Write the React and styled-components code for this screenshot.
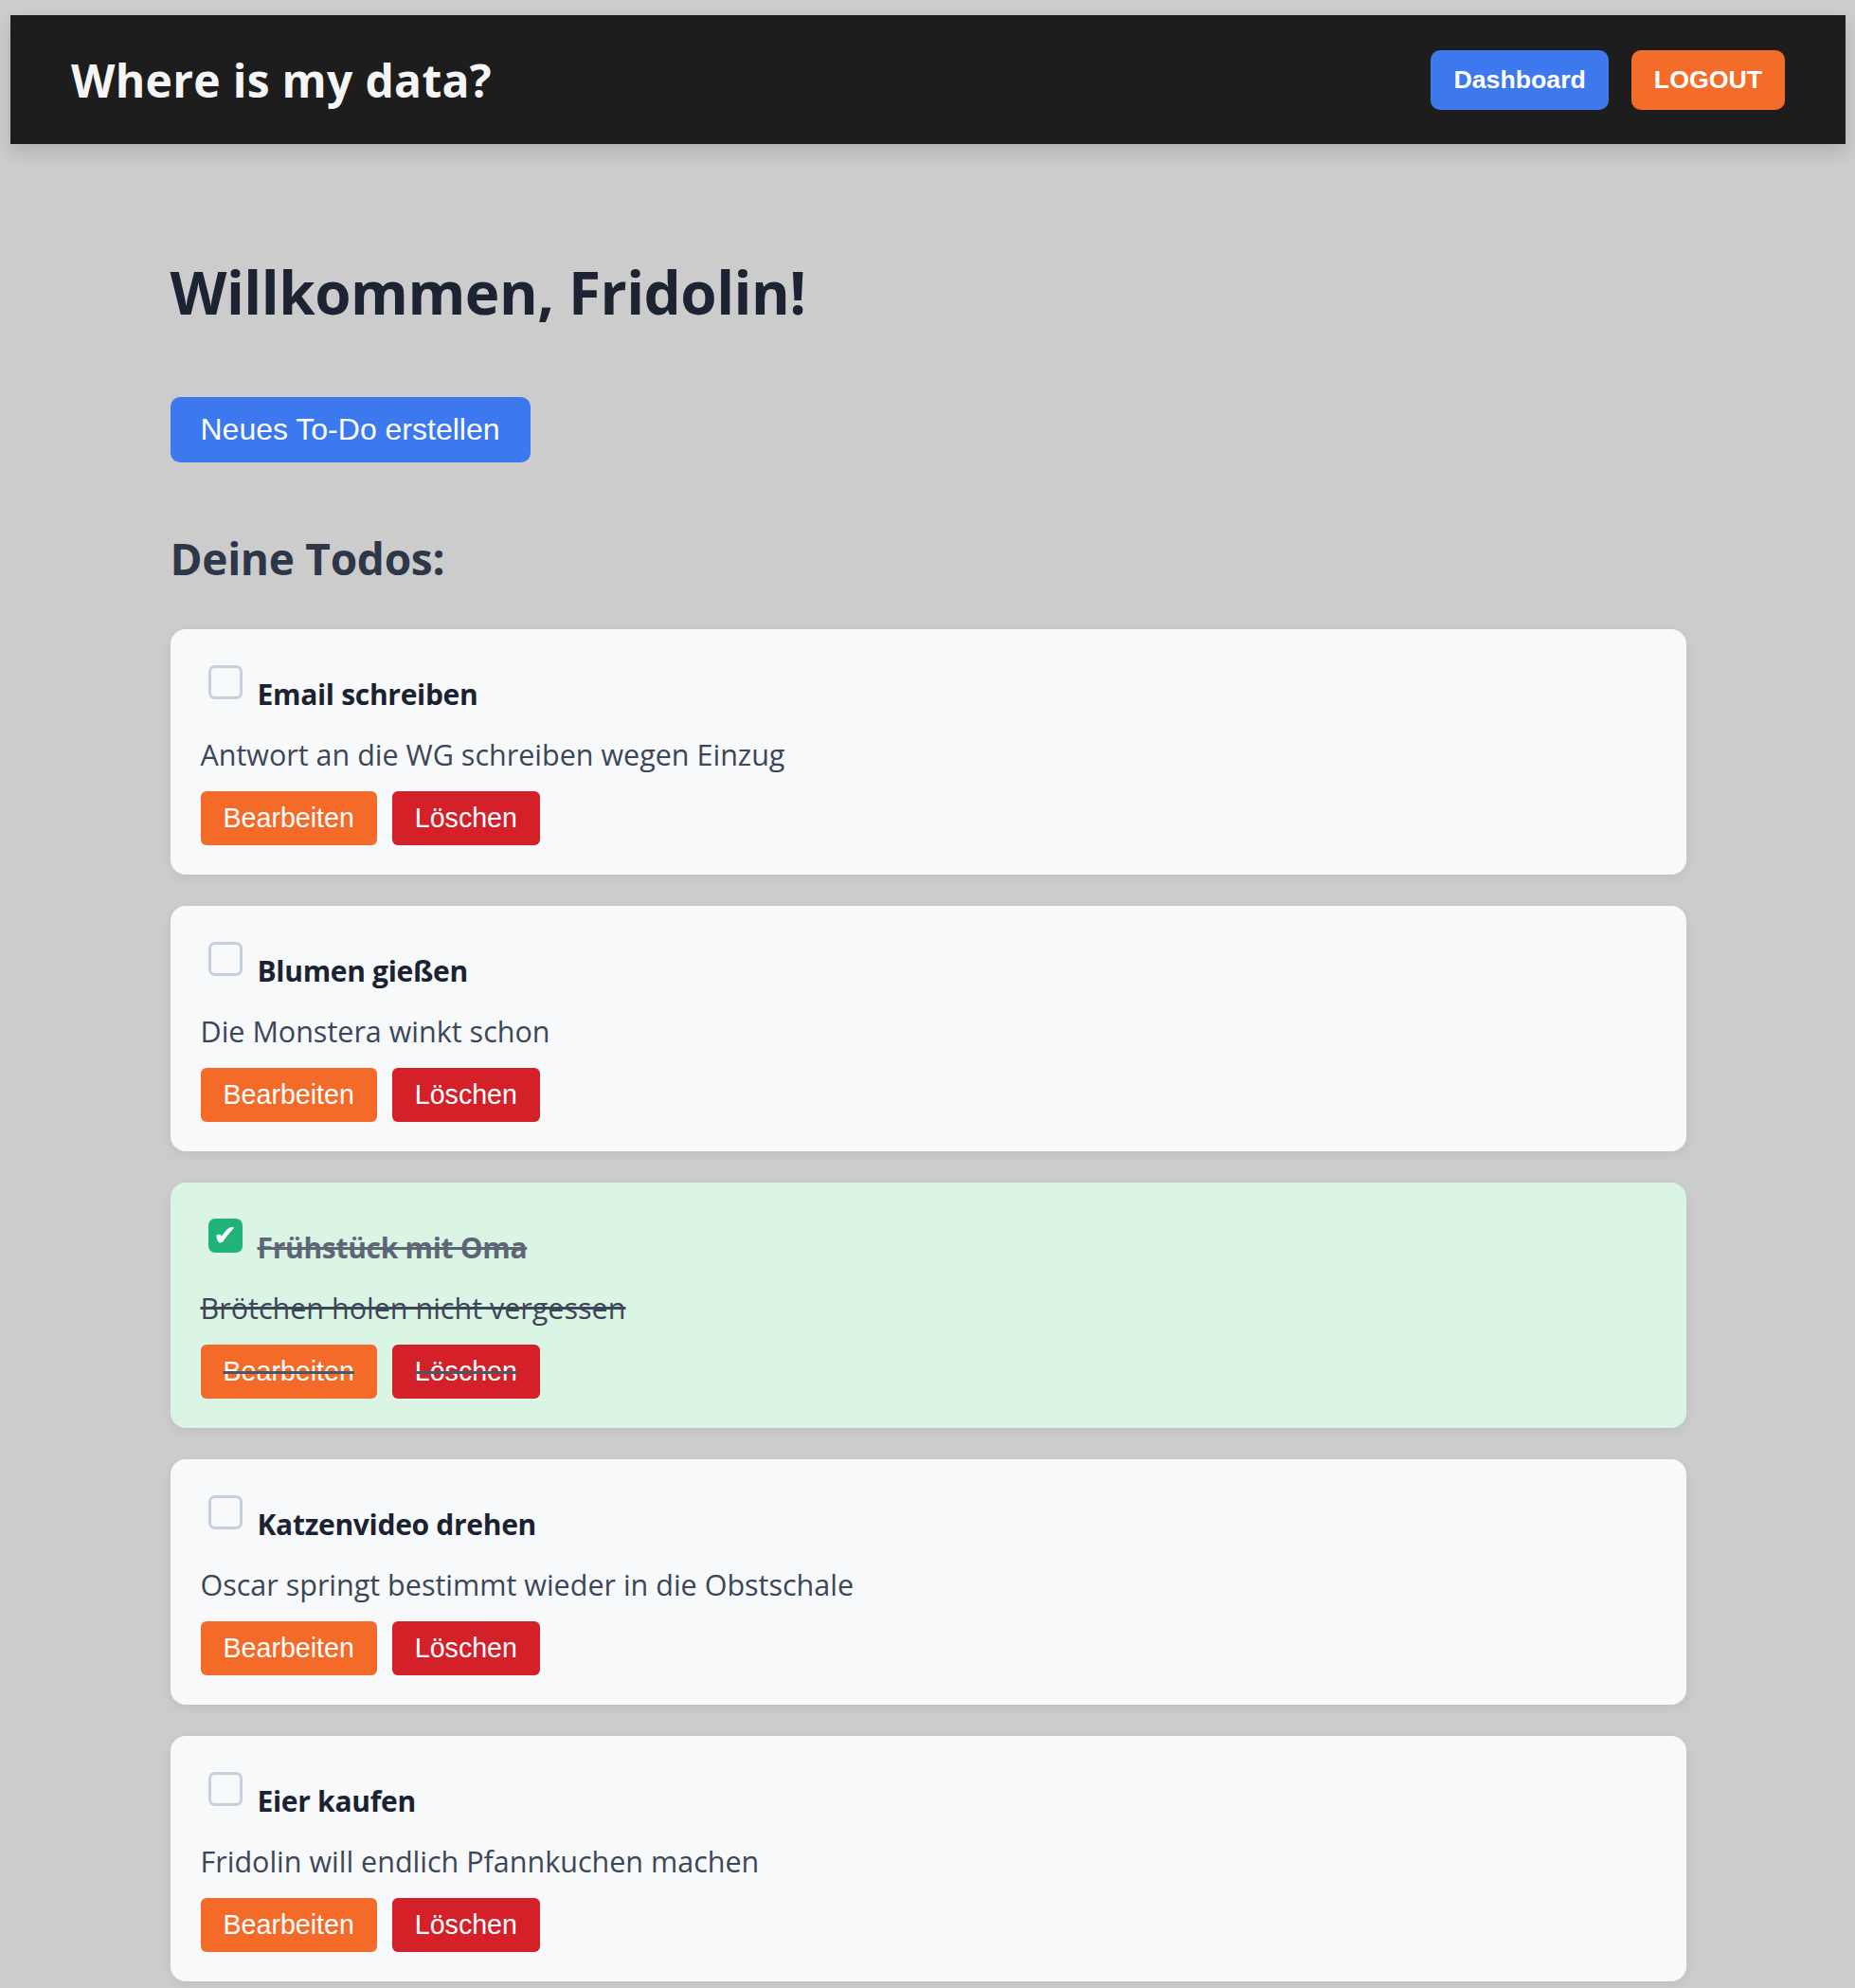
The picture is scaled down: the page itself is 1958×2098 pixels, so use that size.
import React, { useState } from 'react'
import styled, { createGlobalStyle } from 'styled-components'

const GlobalStyle = createGlobalStyle`
  html, body {
    margin: 0;
    padding: 0;
    background: #cccccc;
  }
  body {
    font-family: 'Open Sans', 'Noto Sans', sans-serif;
  }
  * {
    box-sizing: border-box;
  }
`

const todosStart = [
  { id: 1, title: 'Email schreiben', text: 'Antwort an die WG schreiben wegen Einzug', done: false },
  { id: 2, title: 'Blumen gießen', text: 'Die Monstera winkt schon', done: false },
  { id: 3, title: 'Frühstück mit Oma', text: 'Brötchen holen nicht vergessen', done: true },
  { id: 4, title: 'Katzenvideo drehen', text: 'Oscar springt bestimmt wieder in die Obstschale', done: false },
  { id: 5, title: 'Eier kaufen', text: 'Fridolin will endlich Pfannkuchen machen', done: false }
]

const App = () => {
  const [todos, setTodos] = useState(todosStart)

  const toggle = id => {
    setTodos(todos.map(t => (t.id === id ? { ...t, done: !t.done } : t)))
  }

  return (
    <>
      <GlobalStyle />
      <Page>
        <Header>
          <Brand>Where is my data?</Brand>
          <Nav>
            <NavButton type="button" color="#3d78ed">Dashboard</NavButton>
            <NavButton type="button" color="#f46c2a">LOGOUT</NavButton>
          </Nav>
        </Header>

        <Main>
          <Welcome>Willkommen, Fridolin!</Welcome>
          <CreateButton type="button">Neues To-Do erstellen</CreateButton>
          <SectionTitle>Deine Todos:</SectionTitle>

          <List>
            {todos.map(todo => (
              <Card key={todo.id} done={todo.done}>
                <TitleRow>
                  <Check type="button" done={todo.done} onClick={() => toggle(todo.id)}>
                    {todo.done && '✔'}
                  </Check>
                  <TodoTitle done={todo.done}>{todo.title}</TodoTitle>
                </TitleRow>
                <TodoText done={todo.done}>{todo.text}</TodoText>
                <Actions>
                  <ActionButton type="button" color="#f46a29" done={todo.done}>Bearbeiten</ActionButton>
                  <ActionButton type="button" color="#d32029" done={todo.done}>Löschen</ActionButton>
                </Actions>
              </Card>
            ))}
          </List>
        </Main>
      </Page>
    </>
  )
}

export default App

const Page = styled.div`
  padding: 16px 10px 0 11px;
  min-height: 2098px;
`

const Header = styled.header`
  height: 136px;
  background: #1d1d1d;
  padding: 0 64px;
  display: flex;
  align-items: center;
  justify-content: space-between;
  box-shadow: 0 8px 18px rgba(0, 0, 0, 0.14);
`

const Brand = styled.h1`
  margin: 0;
  color: #f5f5f5;
  font-size: 48px;
  font-weight: 700;
  letter-spacing: 0.3px;
`

const Nav = styled.nav`
  display: flex;
  gap: 24px;
`

const NavButton = styled.button`
  height: 63px;
  padding: 0 24px;
  border: none;
  border-radius: 10px;
  background: ${props => props.color};
  color: #ffffff;
  font-family: 'Liberation Sans', Arial, sans-serif;
  font-size: 26.7px;
  font-weight: 700;
  cursor: pointer;
`

const Main = styled.main`
  width: 1600px;
  margin: 0 auto;
  padding: 116px 0 0 0;
`

const Welcome = styled.h2`
  margin: 0;
  font-size: 62px;
  line-height: 80px;
  font-weight: 700;
  color: #1c2333;
  letter-spacing: -0.5px;
`

const CreateButton = styled.button`
  margin-top: 71px;
  height: 69px;
  padding: 0 32px;
  border: none;
  border-radius: 10px;
  background: #3c78ee;
  color: #ffffff;
  font-family: 'Liberation Sans', Arial, sans-serif;
  font-size: 32px;
  cursor: pointer;
`

const SectionTitle = styled.h3`
  margin: 71px 0 0 0;
  font-size: 46px;
  line-height: 60px;
  font-weight: 700;
  color: #2d3748;
  letter-spacing: -0.3px;
`

const List = styled.div`
  margin-top: 45px;
  display: flex;
  flex-direction: column;
  gap: 33px;
`

const Card = styled.div`
  background: ${props => (props.done ? '#dbf5e4' : '#f7f9fb')};
  border-radius: 16px;
  padding: 38px 32px 31px 32px;
  box-shadow: 0 4px 12px rgba(0, 0, 0, 0.06);
`

const TitleRow = styled.div`
  display: flex;
  align-items: flex-start;
`

const Check = styled.button`
  width: 36px;
  height: 36px;
  flex-shrink: 0;
  margin: 0 16px 0 8px;
  padding: 0;
  border-radius: 7px;
  border: ${props => (props.done ? 'none' : '3px solid #c6d0dc')};
  background: ${props => (props.done ? '#22b27b' : 'transparent')};
  color: #ffffff;
  font-family: 'DejaVu Sans', sans-serif;
  font-size: 30px;
  line-height: 34px;
  text-align: center;
  cursor: pointer;
`

const TodoTitle = styled.span`
  margin-top: 11px;
  font-size: 30px;
  line-height: 40px;
  font-weight: 700;
  color: ${props => (props.done ? '#5e6676' : '#1b2232')};
  text-decoration: ${props => (props.done ? 'line-through' : 'none')};
  letter-spacing: -0.3px;
`

const TodoText = styled.p`
  margin: 23px 0 0 0;
  font-size: 30.5px;
  line-height: 40px;
  color: #3b4658;
  text-decoration: ${props => (props.done ? 'line-through' : 'none')};
`

const Actions = styled.div`
  margin-top: 19px;
  display: flex;
  gap: 16px;
`

const ActionButton = styled.button`
  height: 57px;
  padding: 0 24px;
  border: none;
  border-radius: 6px;
  background: ${props => props.color};
  color: #ffffff;
  font-family: 'Liberation Sans', Arial, sans-serif;
  font-size: 28.6px;
  text-decoration: ${props => (props.done ? 'line-through' : 'none')};
  text-decoration-color: #4b5563;
  text-decoration-thickness: 3px;
  cursor: pointer;
`
